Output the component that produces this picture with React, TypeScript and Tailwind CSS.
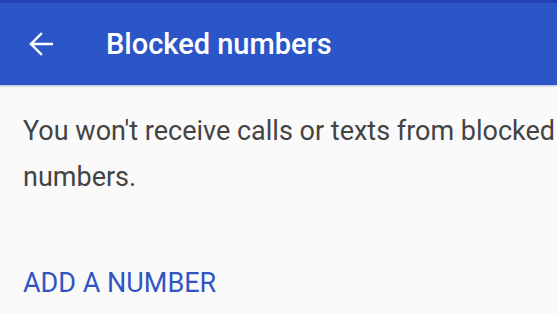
export default function App() {
  return (
    <div className="h-[314px] w-[557px] overflow-hidden bg-[#fafafa] font-['Roboto',sans-serif]">
      <div className="border-t-[3px] border-[#2241b5] bg-[#2c56c8] shadow-[0_1px_2px_rgba(30,50,120,0.35)]">
        <div className="flex h-[82px] items-center">
          <div className="flex w-[106px] items-center pl-[29px]">
            <svg width="24" height="24" viewBox="0 0 24 24" fill="none">
              <path d="M23 12H2M12 2L2 12l10 10" stroke="#ffffff" strokeWidth="2.4" strokeLinecap="square" />
            </svg>
          </div>
          <h1 className="text-[29px] font-medium leading-none text-white">Blocked numbers</h1>
        </div>
      </div>
      <div className="pl-[23px] pt-[23px]">
        <p className="w-[545px] text-[27px] leading-[46px] text-[#444444]">
          You won't receive calls or texts from blocked numbers.
        </p>
        <div className="mt-[70px] text-[27px] leading-none text-[#2f55c2]">ADD A NUMBER</div>
      </div>
    </div>
  );
}
